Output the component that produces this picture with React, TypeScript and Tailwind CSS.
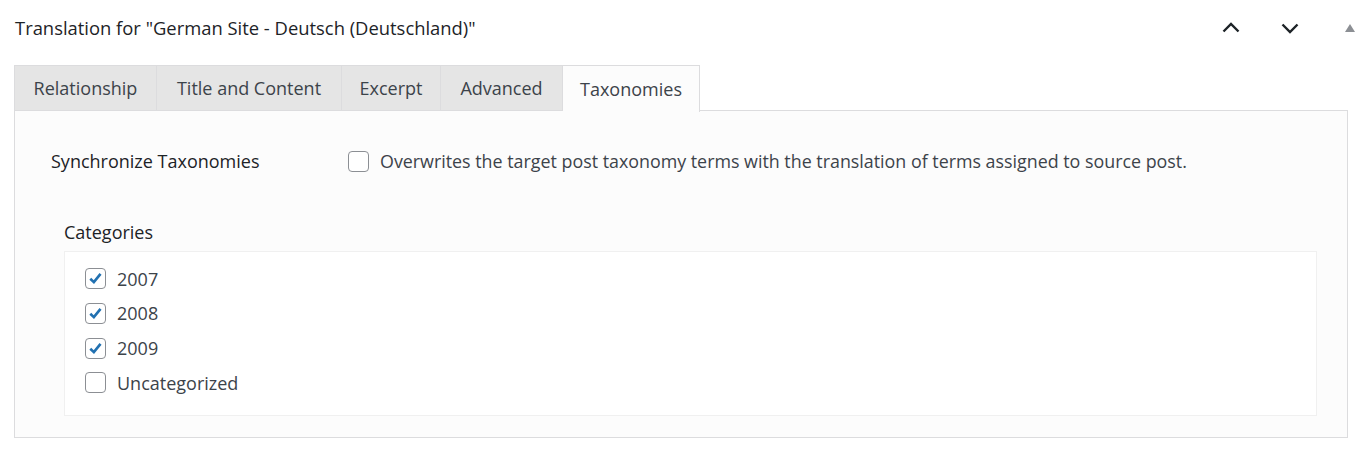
import React from "react";

const tabs = ["Relationship", "Title and Content", "Excerpt", "Advanced", "Taxonomies"];
const tabW = ["w-[143px]", "w-[185px]", "w-[99px]", "w-[122px]", "w-[137px]"];

function Box({ checked }: { checked?: boolean }) {
  return (
    <span className="w-[21px] h-[21px] rounded-[4px] border border-[#8c8f94] bg-white flex items-center justify-center shrink-0">
      {checked && (
        <svg width="19" height="19" viewBox="0 0 20 20">
          <path d="M4.5 10.2L8.3 13.8L15.3 5.2" fill="none" stroke="#2271b1" strokeWidth="2.8" strokeLinejoin="miter" />
        </svg>
      )}
    </span>
  );
}

export default function App() {
  return (
    <div className="w-[1365px] h-[455px] bg-white text-[18px] leading-[24px] text-[#3c434a]" style={{ fontFamily: '"Open Sans", "Noto Sans", sans-serif' }}>
      <div className="h-[56px] flex items-center pl-[15px] pr-[9px]">
        <div className="flex-1 text-[#1d2327] text-[18.4px]">Translation for "German Site - Deutsch (Deutschland)"</div>
        <div className="flex items-center">
          <svg width="24" height="24" viewBox="0 0 24 24" className="mr-[35px]">
            <path d="M4.5 15.5l7.5-7.5 7.5 7.5" fill="none" stroke="#1d2327" strokeWidth="2.4" />
          </svg>
          <svg width="24" height="24" viewBox="0 0 24 24" className="mr-[42px]">
            <path d="M4.5 8.5l7.5 7.5 7.5-7.5" fill="none" stroke="#1d2327" strokeWidth="2.4" />
          </svg>
          <svg width="12" height="10" viewBox="0 0 12 10">
            <path d="M6 1L11 9H1z" fill="#8c8f94" />
          </svg>
        </div>
      </div>
      <div className="mt-[9px] ml-[14px] w-[1334px]">
        <div className="flex h-[46px]">
          {tabs.map((t, i) => {
            const active = i === 4;
            return (
              <div
                key={t}
                className={`${tabW[i]} flex items-center justify-center border-t border-[#dcdcde] ${i === 0 ? "border-l" : ""} border-r ${
                  active ? "bg-[#fcfcfc] text-[#3c434a] relative z-10 -mb-px h-[47px]" : "bg-[#e5e5e5] text-[#3c434a] border-b"
                }`}
              >
                {t}
              </div>
            );
          })}
          <div className="flex-1 border-b border-[#dcdcde]" />
        </div>
        <div className="h-[327px] bg-[#fcfcfc] border border-t-0 border-[#dcdcde] pt-[38px]">
          <div className="flex items-center h-[24px]">
            <div className="w-[333px] pl-[36px] text-[#1d2327]">Synchronize Taxonomies</div>
            <Box />
            <span className="ml-[11px] text-[17.85px]">Overwrites the target post taxonomy terms with the translation of terms assigned to source post.</span>
          </div>
          <div className="pl-[49px] mt-[47px] text-[#1d2327]">Categories</div>
          <div className="ml-[49px] mr-[30px] mt-[7px] h-[165px] bg-white border border-[#f0f0f0] pl-[20px] pt-[16px] flex flex-col gap-[13.8px]">
            {[["2007", true], ["2008", true], ["2009", true], ["Uncategorized", false]].map(([l, c]) => (
              <div key={l as string} className="flex items-center h-[21px]">
                <Box checked={c as boolean} />
                <span className="ml-[11px]">{l as string}</span>
              </div>
            ))}
          </div>
        </div>
      </div>
    </div>
  );
}
